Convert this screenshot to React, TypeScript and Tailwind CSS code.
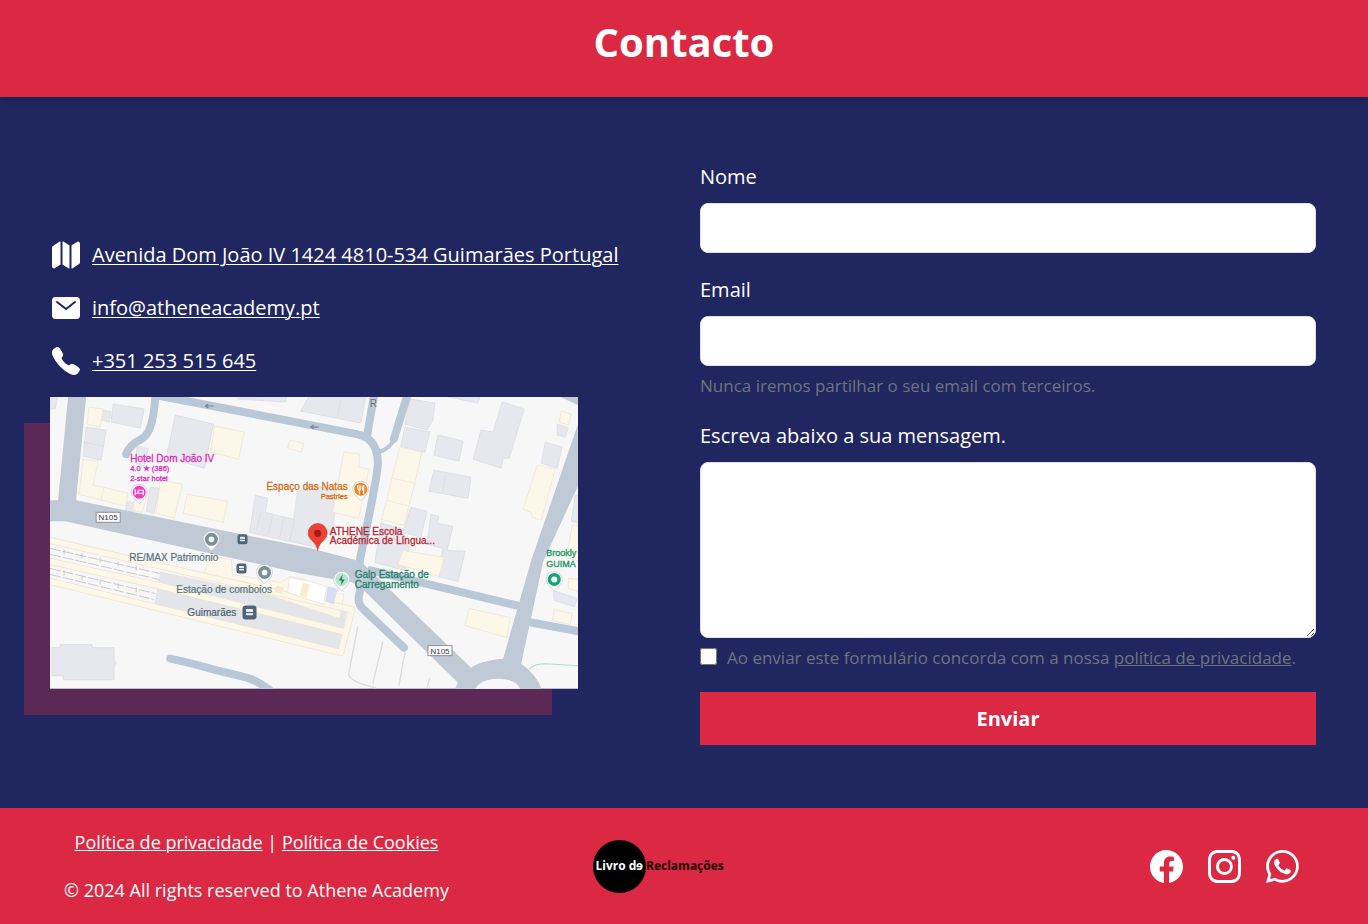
import React from "react";
import { IoMap, IoMail, IoCall } from "react-icons/io5";
import { BsFacebook, BsInstagram, BsWhatsapp } from "react-icons/bs";

const cream = { fill: "#fdf7e9", stroke: "#efe5cf", strokeWidth: 0.8 };
const block = { fill: "#e6e8ed", stroke: "#d9dce4", strokeWidth: 0.8 };
const lane = {
  fill: "none",
  stroke: "#b9c8d6",
  strokeWidth: 8,
  strokeLinecap: "round" as const,
  strokeLinejoin: "round" as const,
};

function Pin({ x, y, color, r = 6.5 }: { x: number; y: number; color: string; r?: number }) {
  return (
    <g>
      <path
        d={`M${x - r - 1.5} ${y} a${r + 1.5} ${r + 1.5} 0 1 1 ${2 * r + 3} 0 q0 4 -${r + 1.5} ${r + 5} q-${r + 1.5} -${r + 1} -${r + 1.5} -${r + 5}z`}
        fill="#fff"
        stroke="#c9ccd1"
        strokeWidth="0.8"
      />
      <circle cx={x} cy={y} r={r} fill={color} />
    </g>
  );
}

function BusStop({ x, y, r = 5 }: { x: number; y: number; r?: number }) {
  return (
    <g>
      <rect x={x - r} y={y - r} width={2 * r} height={2 * r} rx={r / 2.2} fill="#4f6577" />
      <rect x={x - r / 2} y={y - r / 2} width={r} height={r * 0.9} rx="0.8" fill="#e8eef2" />
      <rect x={x - r / 2} y={y - r / 12} width={r} height={r / 6} fill="#4f6577" />
    </g>
  );
}

function RoadSign({ x, y }: { x: number; y: number }) {
  return (
    <g>
      <rect x={x - 12} y={y - 5} width="24" height="10" fill="#fff" stroke="#8c8f94" />
      <text x={x} y={y + 3} textAnchor="middle" fontSize="8" fill="#333">N105</text>
    </g>
  );
}

function StreetMap() {
  return (
    <svg
      viewBox="50 397 527 291"
      className="block w-full"
      role="img"
      aria-label="Mapa da ATHENE em Guimarães"
      fontFamily="'Liberation Sans', sans-serif"
    >
      <rect x="50" y="397" width="527" height="291" fill="#f7f7f7" />

      <g {...block}>
        <path d="M50 397h8l-3 12h-5zM113 404l31 5-4 19-29-6zM86 427l20 3-5 30-18-4zM83 442l21 4M103 410l8 2-2 10-8-2z" />
        <path d="M175 415l38 9-9 44-38-11zM137 446l11 2-4 18-9-3z" />
        <path d="M238 397h48l-1 5-48-3zM308 397h57l-5 26-60-12zM340 400l-3 17" />
        <path d="M409 399l25 4-2 17-6 10-22-6zM404 427l25 5-5 20-24-6z" />
        <path d="M501 402l22 7-15 49-6 0-2 10-28-9 8-29 12 2zM437 435l25 6-4 20-25-6zM433 470l37 7-3 21-39-7zM444 475l-2 16M447 397h32l-2 6z" />
        <path d="M255 495l12 3-2 14 28 7 4-28 8-2 2-6 29 8-4 40-13 0-3 16-67-15zM260 513l-4 17M272 515l-4 18M283 518l-4 20M294 520l-5 20M318 519l-4 30" />
        <path d="M410 507l16 4-6 26-18-5zM430 514l8 2-2 7 16 3-6 24 18 1-7 30-20-5 5-28-16-4z" />
        <path d="M380 523l20 5 8 20-4 22-30-8zM556 424l11 4-3 9-8-2zM544 442l17 5-5 21-16-5zM552 590l24 8-3 8-20-6zM574 495h3v28l-7-2z" />
        <path d="M127 501l10 2-5 13-7-2zM150 487l9 1-5 25-8-2z" />
        <path d="M52 647h8v-3h32v3h22v13l2 2-2 4v13H63v-4H52z" />
      </g>
      <g {...cream}>
        <path d="M89 407l14 2-3 18-13-3zM83 459l15 2-5 24 10 2 25 6-3 13-46-12zM104 487l-3 12M214 426l30 6-6 27-28-7zM289 440l14 3-2 9-14-4zM160 480l22 4-8 34-18-5zM138 489l10 2-6 21-10-2zM187 494l40 7-4 21-40-9z" />
        <path d="M343 452l16 2-1 13 10 2-10 49-26-6zM399 447l22 5-7 31-11 42-22-6zM392 478l22 5M386 500l22 6M402 550l41 7-5 19-41-12zM536 465l18 4-14 51-9-3-1-5-8-3zM560 411l10 3-3 11-9-3zM468 608l41 9-3 20-42-12zM553 609l18 4-2 11-18-4zM567 578l10 1v12l-10-3zM571 525h6v36l-12-4z" />
      </g>

      <g strokeLinejoin="round">
        <path d="M160 571l186 40-8 40-185-42z" fill="#e3e5ea" />
        <path d="M204 573l5-18 22 4 1 15 48 8 10-6 15 3 12 12 26 3-4 24z" {...cream} />
        <path d="M50 540l150 35 151 34-11 43L50 581M50 561l112 25 181 45" fill="none" stroke="#eee4cd" strokeWidth="7" />
        <path d="M50 540l150 35 151 34-11 43L50 581M50 561l112 25 181 45" fill="none" stroke="#fdf7e9" strokeWidth="5.5" />
      </g>
      <path
        d="M50 548l109 25M50 554l109 25M50 568l105 25M50 574l104 25"
        fill="none"
        stroke="#c3c4c8"
        strokeWidth="0.9"
        strokeDasharray="11 2"
      />
      <path
        d="M64 549v5M82 553v5M100 557v5M118 561v5M136 565v5M64 570v5M82 575v5M100 579v5M118 583v5M136 587v5"
        stroke="#c3c4c8"
        strokeWidth="0.9"
      />
      <path d="M289 577l21 4 16 5-3 18-36-12z" fill="#fff" stroke="#e4e2dc" strokeWidth="0.8" />
      <path d="M302 582l7 2-3 13-7-2zM276 585l7 2-2 6-7-2z" fill="#f6ebcd" />
      <path d="M327 586l10 2-4 16-8-3z" fill="#d8dbf8" />

      <g {...lane}>
        <path d="M155 397q-2 36-14 42t-15 15" />
        <path d="M160 396l140 27 56 11q21 4 21 29 0 12-18 97v32q-4 11 5 18l39 37" />
        <path d="M366 437l7-40M406 397l-13 42" />
        <path d="M393 439q-3 9-15 13" strokeWidth="4" />
        <path d="M370 570l146 35M530 622l49 9M170 658c25 5 42 11 60 15s24 5 40 17" />
      </g>
      <g fill="#c0cad7">
        <path d="M68 397h18l-10 103 234 48 43 11 9 4 108 104q9-7 32-9l28-98 47-137v62l-35 76-22 102q16 11 21 27h-88l4-8-97-95-8-5-52-9L65 521H50v-21h8z" />
        <path d="M559 397h18v8z" />
      </g>
      <path d="M474 688q6-10 23-10t22 10z" fill="#f7f7f7" />
      <path d="M357 626l-9 47q0 8 27 14M382 641l-10 42M404 652l-6 33M429 677l-3 10" fill="none" stroke="#dcdde0" strokeWidth="1.4" />
      <path d="M528 668q6-5 16-5l33 2" fill="none" stroke="#a7dbc7" />
      <path d="M213 406h-8m3-2-3 2 3 2M318 427h-8m3-2-3 2 3 2" fill="none" stroke="#798897" strokeWidth="1.2" />
      <text x="369" y="407" fontSize="10" fill="#69727c">R</text>

      <RoadSign x={108} y={517} />
      <RoadSign x={439} y={650} />

      <g fill="#dc2fb9" stroke="#dc2fb9" strokeWidth="0.3">
        <text x="130" y="462" fontSize="10">Hotel Dom João IV</text>
        <text x="130" y="471" fontSize="7.5">4.0 ★ (386)</text>
        <text x="130" y="481" fontSize="7.5">2-star hotel</text>
      </g>
      <Pin x={139} y={492} color="#f43ac4" />
      <path d="M135 489v6m0-2h8v2m0-2v-3h-5v3" fill="none" stroke="#fff" strokeWidth="1.2" />

      <g fill="#d56f17" textAnchor="end" stroke="#d56f17" strokeWidth="0.3">
        <text x="347" y="490" fontSize="10">Espaço das Natas</text>
        <text x="347" y="499" fontSize="7.5">Pastries</text>
      </g>
      <Pin x={360} y={489} color="#f58220" />
      <path d="M357 485v3q0 2 1.5 2v4M360 485v3q0 2-1.5 2M358.5 485v5M363 485v9m0-9q-2 2-1 5h1" fill="none" stroke="#fff" strokeWidth="1" />

      <path d="M317 550q-1-6-6-10a9.5 9.5 0 1 1 12 0q-5 4-6 10z" fill="#ea4335" stroke="#d0352a" strokeWidth="0.6" />
      <circle cx="317" cy="533" r="3.6" fill="#a61b14" />
      <g fill="#b92735" stroke="#b92735" strokeWidth="0.3" fontSize="10">
        <text x="329" y="535">ATHENE Escola</text>
        <text x="329" y="544">Académica de Língua...</text>
      </g>

      <Pin x={211} y={539} color="#78909c" />
      <circle cx="211" cy="539" r="2.8" fill="#fff" />
      <Pin x={264} y={572} color="#78909c" />
      <circle cx="264" cy="572" r="2.8" fill="#fff" />
      <BusStop x={242} y={539} />
      <BusStop x={241} y={568} />
      <BusStop x={249} y={612} r={7} />
      <g fill="#54727e" stroke="#54727e" strokeWidth="0.2" fontSize="10">
        <text x="129" y="561">RE/MAX Património</text>
        <text x="176" y="593">Estação de comboios</text>
        <text x="187" y="615" fill="#455b70">Guimarães</text>
      </g>

      <Pin x={341} y={579} color="#b7e4cb" />
      <path d="M342 574l-4 6h3l-1 5 4-6h-3z" fill="#188064" />
      <Pin x={553} y={579} color="#16a574" />
      <circle cx="553" cy="579" r="3" fill="#fff" />
      <g fill="#1d8069" stroke="#1d8069" strokeWidth="0.3" fontSize="10">
        <text x="354" y="578">Galp Estação de</text>
        <text x="354" y="588">Carregamento</text>
      </g>
      <g fill="#16945f" stroke="#16945f" strokeWidth="0.3" fontSize="9">
        <text x="545" y="556">Brookly</text>
        <text x="545" y="567">GUIMA</text>
      </g>
    </svg>
  );
}

const contacts = [
  { Icon: IoMap, text: "Avenida Dom João IV 1424 4810-534 Guimarães Portugal", href: "#mapa" },
  { Icon: IoMail, text: "info@atheneacademy.pt", href: "mailto:info@atheneacademy.pt" },
  { Icon: IoCall, text: "+351 253 515 645", href: "tel:+351253515645" },
];

const socials = [
  { Icon: BsFacebook, label: "Facebook" },
  { Icon: BsInstagram, label: "Instagram" },
  { Icon: BsWhatsapp, label: "WhatsApp" },
];

export default function App() {
  return (
    <div className="bg-[#20265f] font-['Open_Sans','Noto_Sans',sans-serif] text-xl text-white">
      <header className="relative bg-[#db2843] pt-[15px] pb-7 text-center shadow-md">
        <h1 className="text-[40px] leading-[54px] font-bold">Contacto</h1>
      </header>

      <main className="grid grid-cols-2 items-center pt-16 pb-[63px]">
        <section className="pt-[22px] pl-[50px]">
          <ul className="flex flex-col gap-[21px]">
            {contacts.map(({ Icon, text, href }) => (
              <li key={text} className="flex items-center gap-[10px] leading-8 whitespace-nowrap">
                <Icon className="size-8 shrink-0" />
                <a href={href} className="underline decoration-1 underline-offset-2">{text}</a>
              </li>
            ))}
          </ul>
          <div id="mapa" className="mt-5 w-5/6 shadow-[-26px_26px_0_0_#5a2956]">
            <StreetMap />
          </div>
        </section>

        <form className="flex flex-col pr-[52px] pl-4" onSubmit={(e) => e.preventDefault()}>
          <label htmlFor="nome" className="mb-[10px] leading-8">Nome</label>
          <input id="nome" type="text" className="h-[50px] rounded-lg border border-[#dee2e6] bg-white px-4 text-gray-900" />
          <label htmlFor="email" className="mt-[21px] mb-[10px] leading-8">Email</label>
          <input id="email" type="email" aria-describedby="email-ajuda" className="h-[50px] rounded-lg border border-[#dee2e6] bg-white px-4 text-gray-900" />
          <p id="email-ajuda" className="mt-1 text-[17px] leading-8 text-[#6c757d]">
            Nunca iremos partilhar o seu email com terceiros.
          </p>
          <label htmlFor="mensagem" className="mt-[18px] mb-[10px] leading-8">Escreva abaixo a sua mensagem.</label>
          <textarea id="mensagem" className="h-[176px] resize rounded-lg border border-[#dee2e6] bg-white px-4 py-2 text-gray-900" />
          <div className="mt-1 mb-[18px] flex items-start gap-[10px] text-[17px] leading-8 text-[#6c757d]">
            <input id="aceito" type="checkbox" className="mt-[6px] size-[17px] shrink-0" />
            <label htmlFor="aceito">
              Ao enviar este formulário concorda com a nossa{" "}
              <a href="#privacidade" className="underline decoration-1">política de privacidade</a>.
            </label>
          </div>
          <button type="submit" className="h-[53px] bg-[#db2843] font-bold">Enviar</button>
        </form>
      </main>

      <footer className="flex items-center bg-[#db2843] py-5 text-lg">
        <div className="w-3/8 text-center leading-7">
          <p>
            <a href="#privacidade" className="underline decoration-1">Política de privacidade</a> |{" "}
            <a href="#cookies" className="underline decoration-1">Política de Cookies</a>
          </p>
          <p className="mt-5">© 2024 All rights reserved to Athene Academy</p>
        </div>
        <div className="flex flex-1 items-center justify-between pr-[69px] pl-20">
          <a href="#reclamacoes" className="flex items-center text-xs font-bold whitespace-nowrap">
            <span className="flex size-[53px] items-center justify-center rounded-full bg-black">
              <span>Livro d<span className="inline-block -scale-x-100">e</span></span>
            </span>
            <span className="text-[#1d0509]">Reclamações</span>
          </a>
          <div className="flex gap-[25px]">
            {socials.map(({ Icon, label }) => (
              <a key={label} href={`#${label.toLowerCase()}`} aria-label={label}>
                <Icon className="size-[33px]" />
              </a>
            ))}
          </div>
        </div>
      </footer>
    </div>
  );
}
